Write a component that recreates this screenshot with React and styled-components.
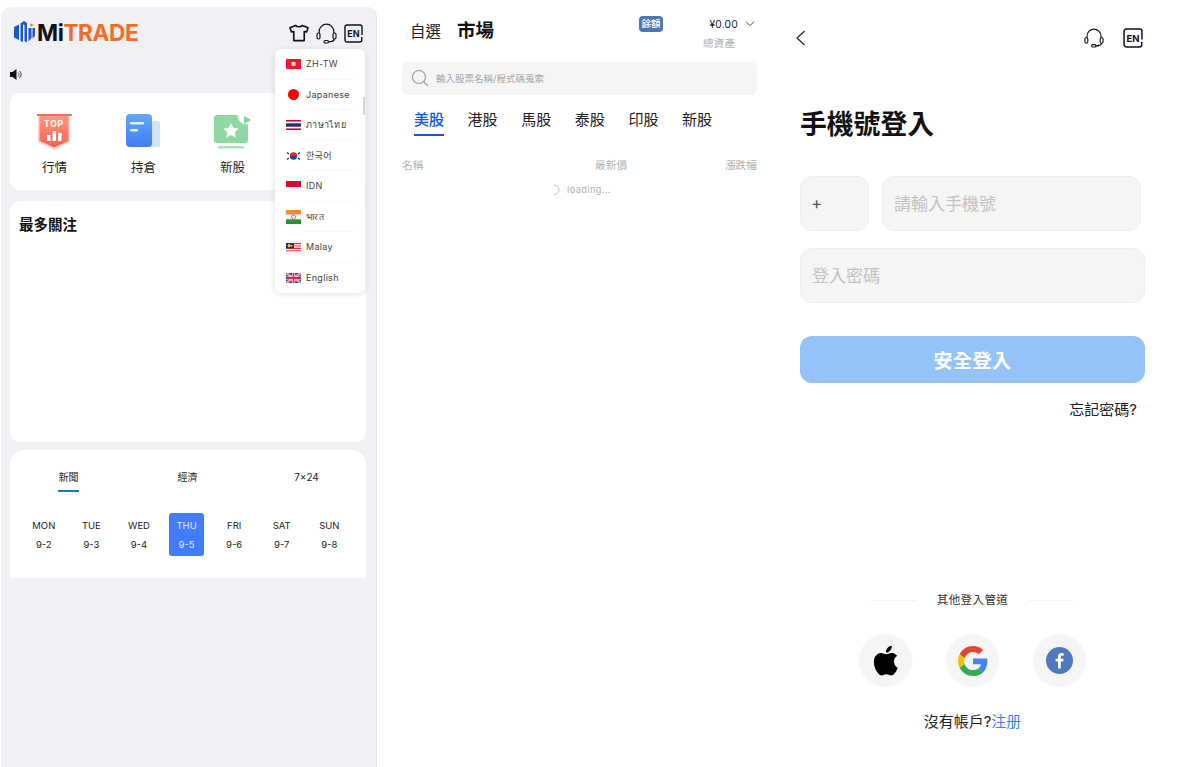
import React from 'react'
import styled, { createGlobalStyle } from 'styled-components'

const GlobalStyle = createGlobalStyle`
  html, body {
    margin: 0;
    padding: 0;
    background: #fff;
  }
  body {
    font-family: Inter, "Noto Sans CJK TC", sans-serif;
    color: #111;
  }
  * {
    box-sizing: border-box;
  }
`

const Page = styled.div`
  display: flex;
  width: 1204px;
  height: 767px;
  overflow: hidden;
`

/* left column */
const HomePanel = styled.section`
  position: relative;
  width: 376px;
  height: 760px;
  margin: 7px 0 0 1px;
  padding: 0 9px 0 8px;
  background: #f0f1f5;
  border-right: 1px solid #e4e5ea;
  border-radius: 10px 10px 0 0;
  flex: none;
`

const HomeHeader = styled.header`
  display: flex;
  justify-content: space-between;
  align-items: center;
  height: 51px;
  padding: 0 4px 0 5px;
`

const Logo = styled.div`
  display: flex;
  align-items: center;
  gap: 1px;
  margin-top: -1px;
`

const LogoText = styled.span`
  font-size: 22.6px;
  font-weight: 700;
  letter-spacing: -0.4px;
  color: #111;
  b {
    font-weight: 700;
    color: #fb6a22;
  }
`

const HeaderIcons = styled.div`
  display: flex;
  align-items: center;
  gap: ${p => p.$gap || 7}px;
  margin-top: 1px;
`

const Notice = styled.div`
  display: flex;
  align-items: center;
  height: 35px;
  padding-bottom: 3px;
`

const Card = styled.div`
  background: #fff;
  border-radius: 10px;
  width: 356px;
  margin-left: 1px;
`

const QuickCard = styled(Card)`
  display: flex;
  height: 97px;
  padding: 21px 0 0 0;
  margin-top: 0;
`

const QuickItem = styled.div`
  width: 89px;
  display: flex;
  flex-direction: column;
  align-items: center;
  gap: 7px;
  font-size: 12.5px;
  line-height: 18px;
  color: #222;
`

const QuickIcon = styled.div`
  height: 38px;
  display: flex;
  justify-content: center;
`

const FollowCard = styled(Card)`
  height: 241px;
  margin-top: 11px;
  padding: 14px 9px;
`

const FollowTitle = styled.h2`
  margin: 0;
  font-size: 14.5px;
  line-height: 20px;
  font-weight: 700;
  color: #111;
`

const NewsCard = styled(Card)`
  height: 128px;
  margin-top: 8px;
  border-radius: 14px 14px 0 0;
`

const NewsTabs = styled.div`
  display: flex;
  height: 47px;
  padding-top: 20px;
  justify-content: space-between;
  padding-left: 48px;
  padding-right: 49px;
`

const NewsTab = styled.div`
  position: relative;
  width: 21px;
  display: flex;
  justify-content: center;
  white-space: nowrap;
  font-size: 10px;
  line-height: 15px;
  color: #222;
  ${p => p.$active && `
    &::after {
      content: '';
      position: absolute;
      left: 0;
      right: 0;
      top: 20px;
      height: 2px;
      background: #0d7fa8;
    }
  `}
`

const Week = styled.div`
  display: flex;
  padding: 16px 0 0 10px;
`

const Day = styled.div`
  width: 47.6px;
  display: flex;
  justify-content: center;
`

const DayInner = styled.div`
  width: 35px;
  height: 43px;
  border-radius: 3px;
  display: flex;
  flex-direction: column;
  align-items: center;
  padding-top: 5px;
  gap: 4px;
  font-size: 9.5px;
  line-height: 15px;
  color: ${p => (p.$active ? '#e8effd' : '#222')};
  background: ${p => (p.$active ? '#427dff' : 'transparent')};
`

const LangMenu = styled.div`
  position: absolute;
  left: 274px;
  top: 42px;
  width: 90px;
  height: 244px;
  padding: 0 0 0 11px;
  background: #fff;
  border-radius: 6px;
  box-shadow: 0 1px 6px rgba(0, 0, 0, 0.12);
  overflow: hidden;
  &::after {
    content: '';
    position: absolute;
    right: 0;
    top: 48px;
    width: 2px;
    height: 18px;
    background: #d9d9dc;
  }
`

const LangRow = styled.div`
  display: flex;
  align-items: center;
  height: 30.5px;
  gap: 5px;
`

const LangName = styled.div`
  flex: 1;
  height: 100%;
  display: flex;
  align-items: center;
  margin-right: 12px;
  font-size: 9px;
  letter-spacing: 0.3px;
  color: #444;
  white-space: nowrap;
  border-bottom: ${p => (p.$last ? 'none' : '1px solid #f7f7f7')};
`

/* middle column */
const MarketPanel = styled.section`
  width: 380px;
  margin-left: 25px;
  flex: none;
`

const MarketTop = styled.div`
  display: flex;
  height: 62px;
  width: 355px;
`

const MarketTitles = styled.div`
  display: flex;
  align-items: baseline;
  gap: 16px;
  padding: 18px 0 0 8px;
  height: 44px;
`

const WatchTitle = styled.span`
  font-size: 15.5px;
  line-height: 24px;
  color: #222;
`

const MarketTitle = styled.span`
  font-size: 18.5px;
  line-height: 24px;
  font-weight: 700;
  color: #111;
`

const Badge = styled.span`
  margin: 16px 0 0 145px;
  width: 24px;
  height: 16px;
  border-radius: 4px;
  background: #4f76b4;
  color: #fff;
  font-size: 9.5px;
  line-height: 16px;
  font-weight: 500;
  text-align: center;
  flex: none;
`

const Balance = styled.div`
  margin-left: auto;
  padding-top: 17px;
  padding-right: 2px;
  display: flex;
  flex-direction: column;
  align-items: flex-end;
`

const BalanceValue = styled.div`
  display: flex;
  align-items: center;
  gap: 7px;
  font-size: 10.3px;
  line-height: 14px;
  letter-spacing: 0.2px;
  color: #222;
`

const BalanceLabel = styled.div`
  margin-top: 6px;
  margin-right: 20px;
  font-size: 10.7px;
  line-height: 14px;
  color: #b4b4b4;
`

const SearchBar = styled.div`
  display: flex;
  align-items: center;
  gap: 7px;
  width: 355px;
  height: 33px;
  padding: 0 0 2px 9px;
  background: #f5f5f5;
  border-radius: 6px;
  font-size: 9.5px;
  color: #a6a6a6;
`

const MarketTabs = styled.div`
  display: flex;
  gap: 23.6px;
  height: 41px;
  padding: 15px 0 0 12px;
`

const MarketTab = styled.div`
  position: relative;
  font-size: 15px;
  line-height: 20px;
  color: ${p => (p.$active ? '#0d5ae0' : '#222')};
  ${p => p.$active && `
    font-weight: 500;
    &::after {
      content: '';
      position: absolute;
      left: 0;
      right: 0;
      top: 24px;
      height: 2px;
      background: #0d5ae0;
    }
  `}
`

const ColumnHeads = styled.div`
  display: flex;
  justify-content: space-between;
  width: 355px;
  margin-top: 22px;
  font-size: 10.7px;
  line-height: 16px;
  color: #b0b0b0;
  span:nth-child(2) {
    margin-left: 74px;
  }
`

const Loading = styled.div`
  display: flex;
  align-items: center;
  justify-content: center;
  gap: 5px;
  width: 355px;
  margin-top: 8px;
  padding-left: 3px;
  font-size: 9.2px;
  line-height: 16px;
  letter-spacing: 0.4px;
  color: #b0b0b0;
`

/* right column */
const LoginPanel = styled.section`
  width: 345px;
  margin-left: 18px;
  flex: none;
  display: flex;
  flex-direction: column;
`

const LoginTop = styled.div`
  display: flex;
  justify-content: space-between;
  align-items: center;
  height: 24px;
  margin-top: 25px;
  padding-right: 2px;
`

const BackButton = styled.div`
  display: flex;
  margin: 1px 0 0 -5px;
`

const LoginTitle = styled.h1`
  margin: 57px 0 0;
  font-size: 26.8px;
  line-height: 36px;
  font-weight: 700;
  color: #111;
`

const FieldRow = styled.div`
  display: flex;
  gap: 13px;
  margin-top: 34px;
`

const Field = styled.div`
  display: flex;
  align-items: center;
  width: ${p => p.$width}px;
  height: 55px;
  padding: 0 0 2px ${p => p.$pad || 11}px;
  background: #f5f5f5;
  border: 1px solid #eeeeee;
  border-radius: 12px;
  font-size: 17px;
  color: ${p => p.$color || '#c2c2c2'};
`

const PasswordField = styled(Field)`
  margin-top: 17px;
`

const SubmitButton = styled.button`
  margin-top: 33px;
  width: 345px;
  height: 47px;
  border: none;
  border-radius: 12px;
  background: #96c2fa;
  color: #fff;
  font-family: inherit;
  font-size: 19px;
  font-weight: 700;
  letter-spacing: 0.5px;
`

const Forgot = styled.div`
  align-self: flex-end;
  margin: 17px 8px 0 0;
  font-size: 15px;
  line-height: 20px;
  color: #222;
`

const OtherWays = styled.div`
  display: flex;
  align-items: center;
  justify-content: center;
  gap: 21px;
  margin-top: 172px;
  font-size: 11.5px;
  line-height: 16px;
  letter-spacing: 0.4px;
  color: #333;
`

const Rule = styled.i`
  width: 45px;
  height: 1px;
  background: #f3f3f3;
`

const SocialRow = styled.div`
  display: flex;
  justify-content: center;
  gap: 34px;
  margin-top: 26px;
`

const SocialButton = styled.div`
  width: 53px;
  height: 53px;
  border-radius: 50%;
  background: #f5f5f5;
  display: flex;
  align-items: center;
  justify-content: center;
`

const SignUp = styled.div`
  margin-top: 25px;
  text-align: center;
  font-size: 15px;
  line-height: 20px;
  color: #222;
  a {
    color: #3b82f6;
    text-decoration: none;
  }
`

/* drawings */
const LogoMark = () => (
  <svg width="22" height="24" viewBox="1 0 22 24">
    <path d="M1 7 L6 4.500 V20 L1 17.500 Z" fill="#1e57c8" />
    <path d="M7.500 3.500 L11 1 L14 3 V22.500 L11.500 21 V5 L10 4.500 V22 L7.500 21 Z" fill="#1e57c8" />
    <path d="M15.500 8 H18.500 V18 L15.500 21.500 Z" fill="#1e57c8" />
    <path d="M19.500 8 H22 V16 L19.500 18.500 Z" fill="#1e57c8" />
    <circle cx="18.500" cy="5" r="1.300" fill="#fb6a22" />
  </svg>
)

const ShirtIcon = () => (
  <svg width="20" height="18" viewBox="0 0 21 18" fill="none" stroke="#111" strokeWidth="1.700" strokeLinejoin="round">
    <path d="M7 1 C8 3 13 3 14 1 L20 3.500 L18.500 8 L16 7.500 V17 H5 V7.500 L2.500 8 L1 3.500 Z" />
  </svg>
)

const HeadsetIcon = ({ size = 21 }) => (
  <svg width={size} height={size} viewBox="0 0 21 21" fill="none" stroke="#111" strokeWidth="1.200">
    <path d="M3.200 10 V8.500 A7.300 7.300 0 0 1 17.800 8.500 V10" />
    <rect x="1" y="10" width="3" height="6" rx="1.500" />
    <rect x="17" y="10" width="3" height="6" rx="1.500" />
    <path d="M18.500 16 C18 18 15 18.800 12.500 18.800" />
    <rect x="8" y="17.500" width="4.500" height="2.500" rx="1.200" />
  </svg>
)

const EnIcon = ({ size = 19 }) => (
  <svg width={size} height={size} viewBox="0 0 19 19" fill="none">
    <path d="M17.800 13 V16 A2 2 0 0 1 15.800 18 H3 A2 2 0 0 1 1 16 V3 A2 2 0 0 1 3 1 H16 A2 2 0 0 1 18 3 V11" stroke="#111" strokeWidth="1.400" />
    <text x="9.500" y="13" textAnchor="middle" fontFamily="Inter, sans-serif" fontSize="9" fontWeight="700" fill="#111">EN</text>
  </svg>
)

const SpeakerIcon = () => (
  <svg width="14" height="13" viewBox="0 0 14 13">
    <path d="M1 4 H3.500 L7.500 1 V12 L3.500 9 H1 Z" fill="#111" />
    <path d="M9 4.500 A2.500 2.500 0 0 1 9 8.500 M10.500 3 A4.500 4.500 0 0 1 10.500 10" fill="none" stroke="#333" strokeWidth="0.900" />
  </svg>
)

const TopIcon = () => (
  <svg width="36" height="37" viewBox="1 0 36 37">
    <defs>
      <linearGradient id="topFill" x1="0" y1="0" x2="0" y2="1">
        <stop offset="0" stopColor="#ff9a85" />
        <stop offset="1" stopColor="#fd5f50" />
      </linearGradient>
    </defs>
    <path d="M2 1 H34 V28 L18 36 L2 28 Z" fill="#fdd6cf" />
    <path d="M3.500 1 H32.500 V27 L18 33.500 L3.500 27 Z" fill="url(#topFill)" />
    <rect x="0" y="0" width="36" height="2" rx="1" fill="#f56f5c" />
    <text x="18" y="13" textAnchor="middle" fontFamily="Inter, sans-serif" fontSize="8.500" fontWeight="700" letterSpacing="0.800" fill="#fff">TOP</text>
    <rect x="11" y="21" width="3.500" height="6" fill="#fff" />
    <rect x="16.500" y="17" width="3.500" height="10" fill="#fff" />
    <rect x="22" y="19" width="3.500" height="8" fill="#fff" />
  </svg>
)

const HoldingIcon = () => (
  <svg width="35" height="34" viewBox="0 0 35 34">
    <defs>
      <linearGradient id="holdFill" x1="0" y1="0" x2="0" y2="1">
        <stop offset="0" stopColor="#62a8f7" />
        <stop offset="1" stopColor="#3f7ef2" />
      </linearGradient>
    </defs>
    <path d="M22 7 H31 A3 3 0 0 1 34 10 V33 H22 Z" fill="#cfe1fb" />
    <rect x="0" y="0" width="26" height="33" rx="4" fill="url(#holdFill)" />
    <rect x="4" y="8" width="14" height="2.500" rx="1" fill="#e6f0ff" />
    <rect x="4" y="15" width="8" height="2.500" rx="1" fill="#e6f0ff" />
  </svg>
)

const NewStockIcon = () => (
  <svg width="38" height="36" viewBox="0 0 38 36">
    <path d="M3 1 H24 A8 8 0 0 0 34 10 V26 A3 3 0 0 1 31 29 H3 A3 3 0 0 1 0 26 V4 A3 3 0 0 1 3 1 Z" fill="#8fd8a4" />
    <path d="M30 2 L37 6 L30 10 Z" fill="#7fd49a" />
    <rect x="4" y="32" width="26" height="2.500" rx="1" fill="#a5e2b7" />
    <path d="M17 9 L19.400 13.800 L24.600 14.500 L20.800 18.200 L21.700 23.400 L17 20.900 L12.300 23.400 L13.200 18.200 L9.400 14.500 L14.600 13.800 Z" fill="#fff" />
  </svg>
)

const HkFlag = () => (
  <svg width="15" height="10" viewBox="0 0 15 10">
    <rect width="15" height="10" fill="#f3152d" />
    <circle cx="7.500" cy="5" r="2.300" fill="#ffd9d9" />
  </svg>
)
const JpFlag = () => (
  <svg width="15" height="11" viewBox="0 0 15 11">
    <circle cx="7.500" cy="5.500" r="5.500" fill="#f00" />
  </svg>
)
const ThFlag = () => (
  <svg width="15" height="10" viewBox="0 0 15 10">
    <rect width="15" height="10" fill="#fff" />
    <rect width="15" height="1.600" fill="#c8102e" />
    <rect y="3.300" width="15" height="3.400" fill="#2d2a6e" />
    <rect y="8.400" width="15" height="1.600" fill="#c8102e" />
  </svg>
)
const KrFlag = () => (
  <svg width="15" height="12" viewBox="0 0 15 12">
    <rect width="15" height="12" fill="#fff" />
    <path d="M3.800 6 A3.700 3.700 0 0 1 11.200 6 Z" fill="#e32636" />
    <path d="M3.800 6 A3.700 3.700 0 0 0 11.200 6 Z" fill="#1f3f99" />
    <path d="M1 2.500 L3 4 M1 9.500 L3 8 M14 2.500 L12 4 M14 9.500 L12 8" stroke="#333" strokeWidth="1.300" />
  </svg>
)
const IdFlag = () => (
  <svg width="15" height="10" viewBox="0 0 15 10">
    <rect width="15" height="6" fill="#d5102e" />
    <rect y="6" width="15" height="4" fill="#fff" />
  </svg>
)
const InFlag = () => (
  <svg width="15" height="14" viewBox="0 0 15 14">
    <rect width="15" height="4.700" fill="#f58b2c" />
    <rect y="4.700" width="15" height="4.600" fill="#f4f4f4" />
    <rect y="9.300" width="15" height="4.700" fill="#2f8f2f" />
    <circle cx="7.500" cy="7" r="2" fill="none" stroke="#6a6ab0" strokeWidth="0.800" />
  </svg>
)
const MyFlag = () => (
  <svg width="15" height="9" viewBox="0 0 15 9">
    <rect width="15" height="9" fill="#fff" />
    <path d="M0 0.600 H15 M0 3 H15 M0 5.400 H15 M0 7.800 H15" stroke="#dd3b3b" strokeWidth="1.100" />
    <rect width="8" height="5.400" fill="#1c2a80" />
    <circle cx="3.200" cy="2.700" r="1.600" fill="#f5d000" />
    <circle cx="5.800" cy="2.700" r="0.900" fill="#f5d000" />
  </svg>
)
const UkFlag = () => (
  <svg width="15" height="10" viewBox="0 0 15 10">
    <rect width="15" height="10" fill="#2f3f8f" />
    <path d="M0 0 L15 10 M15 0 L0 10" stroke="#fff" strokeWidth="2" />
    <path d="M0 0 L15 10 M15 0 L0 10" stroke="#d8263c" strokeWidth="0.800" />
    <path d="M7.500 0 V10 M0 5 H15" stroke="#fff" strokeWidth="3.200" />
    <path d="M7.500 0 V10 M0 5 H15" stroke="#d8263c" strokeWidth="1.800" />
  </svg>
)

const SearchIcon = () => (
  <svg width="18" height="18" viewBox="0 0 18 18" fill="none" stroke="#9a9a9a" strokeWidth="1.100">
    <circle cx="8" cy="8" r="6.500" />
    <path d="M12.800 12.800 L17 17" />
  </svg>
)

const Chevron = () => (
  <svg width="10" height="6" viewBox="0 0 10 6" fill="none" stroke="#333" strokeWidth="0.900">
    <path d="M1 0.700 L5 4.700 L9 0.700" />
  </svg>
)

const Spinner = () => (
  <svg width="11" height="12" viewBox="0 0 11 12" fill="none" stroke="#bcbcbc" strokeWidth="0.900">
    <path d="M3 1 A5 5 0 1 1 3 11" />
  </svg>
)

const BackIcon = () => (
  <svg width="11" height="16" viewBox="0 0 11 16" fill="none" stroke="#222" strokeWidth="1.200">
    <path d="M9.500 1 L2 8 L9.500 15" />
  </svg>
)

const AppleIcon = () => (
  <svg width="27" height="31" viewBox="0 0 27 31">
    <path
      d="M22 16.400c0-3.700 3-5.400 3.200-5.600-1.800-2.500-4.500-2.900-5.400-2.900-2.300-.2-4.500 1.400-5.700 1.400-1.200 0-3-1.300-4.900-1.300-2.500 0-4.800 1.500-6.100 3.700-2.600 4.600-.7 11.300 1.900 15 1.200 1.800 2.700 3.800 4.600 3.700 1.900-.1 2.600-1.200 4.800-1.200 2.200 0 2.900 1.200 4.900 1.200 2 0 3.300-1.800 4.500-3.600 1.400-2.100 2-4.100 2-4.200-.1 0-3.800-1.500-3.800-6.200zM18.300 5.400C19.300 4.200 20 2.500 19.800.8c-1.500.1-3.200 1-4.300 2.200-.9 1.100-1.800 2.800-1.500 4.500 1.600.1 3.300-.9 4.300-2.100z"
      fill="#000"
    />
  </svg>
)

const GoogleIcon = () => (
  <svg width="30" height="30" viewBox="0 0 48 48">
    <path fill="#EA4335" d="M24 9.500c3.500 0 6.700 1.200 9.200 3.600l6.900-6.900C35.900 2.400 30.500 0 24 0 14.600 0 6.500 5.400 2.600 13.200l8 6.200C12.500 13.700 17.800 9.500 24 9.500z" />
    <path fill="#4285F4" d="M47 24.500c0-1.600-.1-3.100-.4-4.500H24v9h12.900c-.6 3-2.200 5.500-4.700 7.200l7.700 6c4.500-4.200 7.100-10.300 7.100-17.700z" />
    <path fill="#FBBC05" d="M10.500 28.600c-.5-1.400-.8-3-.8-4.600s.3-3.200.8-4.600l-8-6.200C.9 16.500 0 20.100 0 24s.9 7.500 2.600 10.800l7.900-6.200z" />
    <path fill="#34A853" d="M24 48c6.500 0 11.900-2.100 15.900-5.800l-7.700-6c-2.200 1.500-4.900 2.300-8.200 2.300-6.200 0-11.500-4.200-13.400-9.900l-8 6.200C6.500 42.600 14.600 48 24 48z" />
  </svg>
)

const FacebookIcon = () => (
  <svg width="27" height="27" viewBox="0 0 27 27">
    <circle cx="13.500" cy="13.500" r="13.500" fill="#5079bd" />
    <path d="M14.800 21.500v-7h2.400l.4-2.800h-2.800V10c0-.8.300-1.300 1.400-1.300h1.500V6.200c-.3 0-1.100-.1-2.100-.1-2.100 0-3.600 1.300-3.600 3.600v2h-2.400v2.800h2.400v7z" fill="#fff" />
  </svg>
)

const languages = [
  { name: 'ZH-TW', Flag: HkFlag },
  { name: 'Japanese', Flag: JpFlag },
  { name: 'ภาษาไทย', Flag: ThFlag },
  { name: '한국어', Flag: KrFlag },
  { name: 'IDN', Flag: IdFlag },
  { name: 'भारत', Flag: InFlag },
  { name: 'Malay', Flag: MyFlag },
  { name: 'English', Flag: UkFlag },
]

const days = [
  ['MON', '9-2'],
  ['TUE', '9-3'],
  ['WED', '9-4'],
  ['THU', '9-5'],
  ['FRI', '9-6'],
  ['SAT', '9-7'],
  ['SUN', '9-8'],
]

const markets = ['美股', '港股', '馬股', '泰股', '印股', '新股']

export default function App() {
  return (
    <Page>
      <GlobalStyle />
      <HomePanel>
        <HomeHeader>
          <Logo>
            <LogoMark />
            <LogoText>
              Mi<b>TRADE</b>
            </LogoText>
          </Logo>
          <HeaderIcons>
            <ShirtIcon />
            <HeadsetIcon />
            <EnIcon />
          </HeaderIcons>
        </HomeHeader>
        <Notice>
          <SpeakerIcon />
        </Notice>
        <QuickCard>
          <QuickItem>
            <QuickIcon>
              <TopIcon />
            </QuickIcon>
            行情
          </QuickItem>
          <QuickItem>
            <QuickIcon>
              <HoldingIcon />
            </QuickIcon>
            持倉
          </QuickItem>
          <QuickItem>
            <QuickIcon>
              <NewStockIcon />
            </QuickIcon>
            新股
          </QuickItem>
        </QuickCard>
        <FollowCard>
          <FollowTitle>最多關注</FollowTitle>
        </FollowCard>
        <NewsCard>
          <NewsTabs>
            <NewsTab $active>新聞</NewsTab>
            <NewsTab>經濟</NewsTab>
            <NewsTab>7×24</NewsTab>
          </NewsTabs>
          <Week>
            {days.map(([name, date]) => (
              <Day key={name}>
                <DayInner $active={name === 'THU'}>
                  <span>{name}</span>
                  <span>{date}</span>
                </DayInner>
              </Day>
            ))}
          </Week>
        </NewsCard>
        <LangMenu>
          {languages.map(({ name, Flag }, i) => (
            <LangRow key={name}>
              <Flag />
              <LangName $last={i === languages.length - 1}>{name}</LangName>
            </LangRow>
          ))}
        </LangMenu>
      </HomePanel>

      <MarketPanel>
        <MarketTop>
          <MarketTitles>
            <WatchTitle>自選</WatchTitle>
            <MarketTitle>市場</MarketTitle>
          </MarketTitles>
          <Badge>餘額</Badge>
          <Balance>
            <BalanceValue>
              ¥0.00 <Chevron />
            </BalanceValue>
            <BalanceLabel>總資產</BalanceLabel>
          </Balance>
        </MarketTop>
        <SearchBar>
          <SearchIcon />
          輸入股票名稱/程式碼蒐索
        </SearchBar>
        <MarketTabs>
          {markets.map((m, i) => (
            <MarketTab key={m} $active={i === 0}>
              {m}
            </MarketTab>
          ))}
        </MarketTabs>
        <ColumnHeads>
          <span>名稱</span>
          <span>最新價</span>
          <span>漲跌幅</span>
        </ColumnHeads>
        <Loading>
          <Spinner />
          loading...
        </Loading>
      </MarketPanel>

      <LoginPanel>
        <LoginTop>
          <BackButton>
            <BackIcon />
          </BackButton>
          <HeaderIcons $gap={19}>
            <HeadsetIcon size={20} />
            <EnIcon size={20} />
          </HeaderIcons>
        </LoginTop>
        <LoginTitle>手機號登入</LoginTitle>
        <FieldRow>
          <Field $width={69} $pad={10} $color="#555">
            +
          </Field>
          <Field $width={259}>請輸入手機號</Field>
        </FieldRow>
        <PasswordField $width={345}>登入密碼</PasswordField>
        <SubmitButton>安全登入</SubmitButton>
        <Forgot>忘記密碼?</Forgot>
        <OtherWays>
          <Rule />
          其他登入管道
          <Rule />
        </OtherWays>
        <SocialRow>
          <SocialButton>
            <AppleIcon />
          </SocialButton>
          <SocialButton>
            <GoogleIcon />
          </SocialButton>
          <SocialButton>
            <FacebookIcon />
          </SocialButton>
        </SocialRow>
        <SignUp>
          沒有帳戶?<a href="#signup">注册</a>
        </SignUp>
      </LoginPanel>
    </Page>
  )
}
